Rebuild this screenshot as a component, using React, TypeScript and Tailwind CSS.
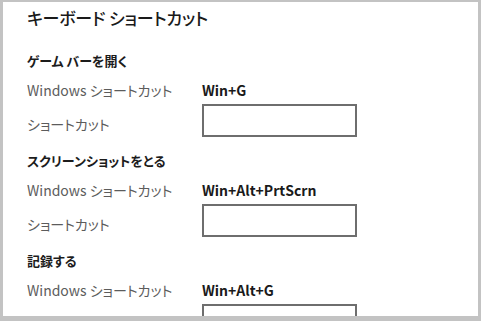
import React from "react";

type Section = { title: string; keys: string };

const sections: Section[] = [
  { title: "ゲーム バーを開く", keys: "Win+G" },
  { title: "スクリーンショットをとる", keys: "Win+Alt+PrtScrn" },
  { title: "記録する", keys: "Win+Alt+G" },
];

export default function App() {
  return (
    <div className="w-[481px] h-[321px] bg-[#c3c3c3] pt-[2px] pl-[3px] pr-[3px] pb-[5px] font-['Noto_Sans_CJK_JP',sans-serif] [font-feature-settings:'palt']">
      <div className="h-full bg-white overflow-hidden pt-[5px] pl-[24px]">
        <div className="h-[22px] leading-[22px] text-[17px] font-medium text-[#1a1a1a] tracking-[-0.2px]">
          キーボード ショートカット
        </div>
        <div className="mt-[23px] flex flex-col gap-[15px]">
          {sections.map((s) => (
            <div key={s.title} className="flex flex-col">
              <div className="h-[18px] leading-[18px] text-[13px] font-bold text-[#1c1c1c]">
                {s.title}
              </div>
              <div className="mt-[11px] h-[18px] flex items-center">
                <div className="w-[175px] text-[14px] leading-[18px] text-[#5c5c5c]">
                  Windows ショートカット
                </div>
                <div className="text-[14px] leading-[18px] font-bold text-[#1a1a1a]">
                  {s.keys}
                </div>
              </div>
              <div className="mt-[5px] h-[33px] flex items-center">
                <div className="w-[175px] pt-[6px] text-[14px] leading-[18px] text-[#5c5c5c]">
                  ショートカット
                </div>
                <div className="w-[155px] h-[33px] border-2 border-[#6e6e6e] bg-white" />
              </div>
            </div>
          ))}
        </div>
      </div>
    </div>
  );
}
